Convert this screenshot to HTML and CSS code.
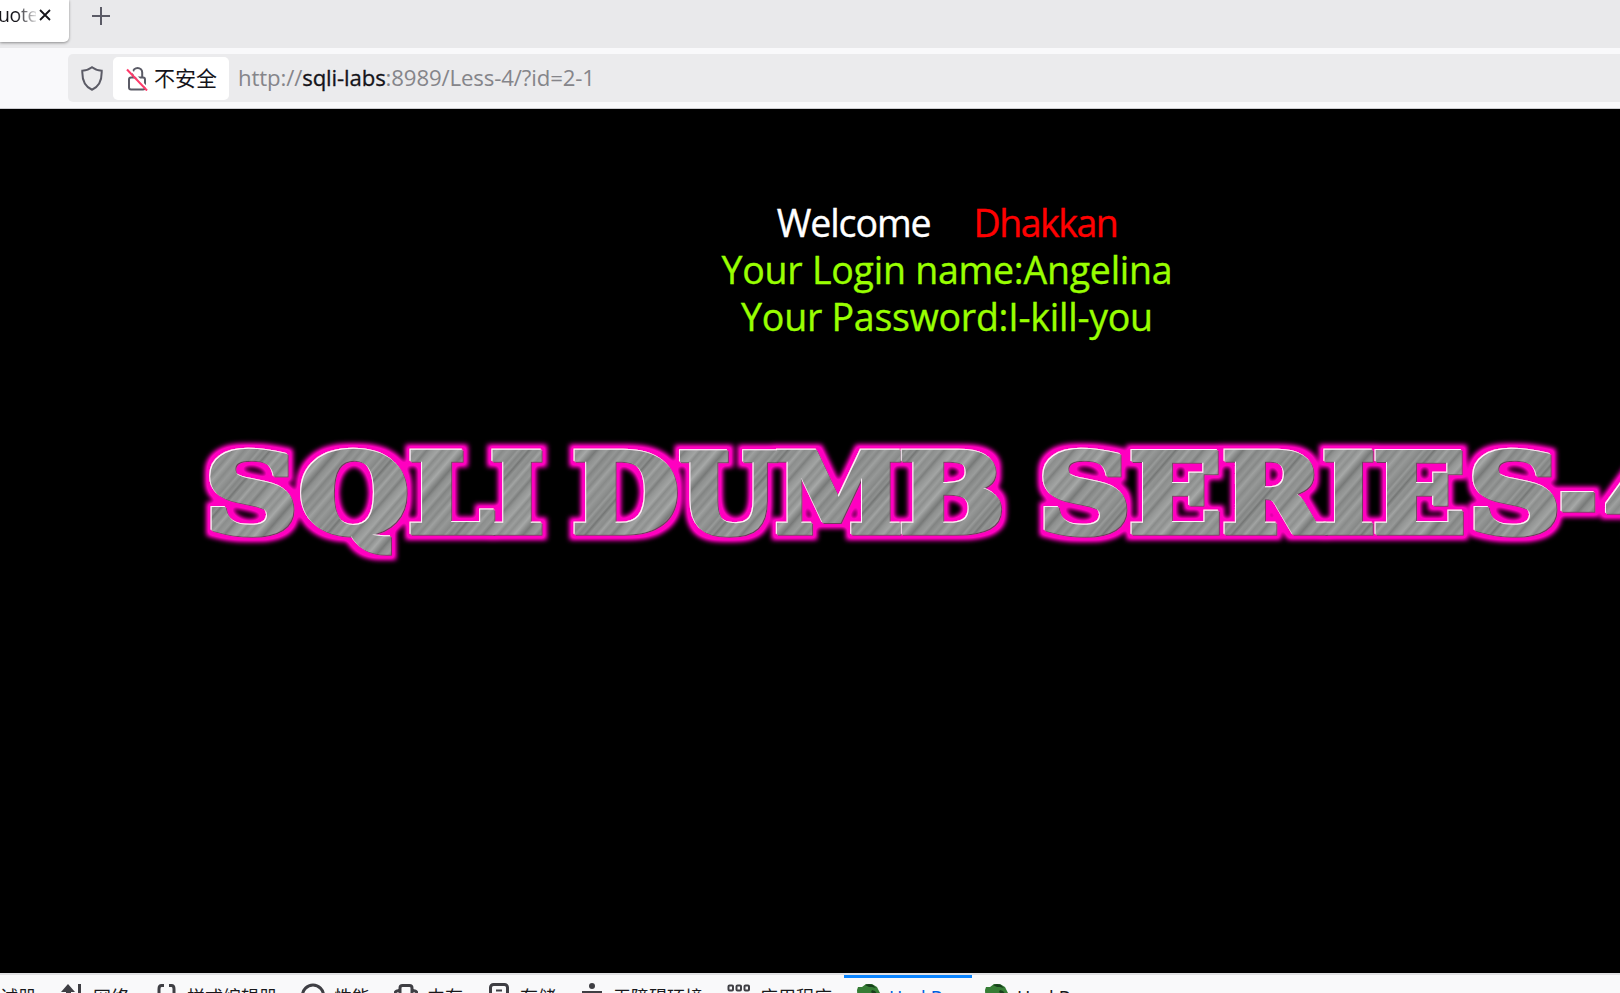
FILE: index.html
```
<!DOCTYPE html>
<html lang="zh-CN">
<head>
<meta charset="utf-8">
<title>Less-4</title>
<link rel="stylesheet" href="styles.css">
</head>
<body>
<header class="tabs">
  <div class="tab"><span class="tab-title">uote</span>
    <svg class="close" viewBox="0 0 12 12"><path d="M1 1l10 10M11 1L1 11"/></svg>
  </div>
  <svg class="plus" viewBox="0 0 18 18"><path d="M9 0v18M0 9h18"/></svg>
</header>
<nav class="toolbar">
  <div class="urlbar">
    <svg class="shield" viewBox="0 0 22 25"><path d="M11 1.2C8 3.6 5 4.3 1.3 4.7c-.3 8.8 1.6 15.7 9.7 19 8.100-3.300 10-10.200 9.700-19C17 4.300 14 3.600 11 1.200z"/></svg>
    <div class="identity">
      <svg class="lock" viewBox="0 0 22 25"><path d="M7 11V6.500a4.600 4.600 0 0 1 9.200 0V11"/><rect x="3" y="11.500" width="16" height="12" rx="2"/><path class="gap" d="M3 2l19 21"/><path class="slash" d="M1 3.500l20 21"/></svg>
      <span class="insecure">不安全</span>
    </div>
    <div class="url">http://<b>sqli-labs</b>:8989/Less-4/?id=2-1</div>
  </div>
</nav>
<main class="page">
  <div class="message">
    <div class="line welcome"><span class="white">Welcome</span><span class="red">Dhakkan</span></div>
    <div class="line login">Your Login name:Angelina</div>
    <div class="line password">Your Password:I-kill-you</div>
  </div>
  <svg class="logo" viewBox="190 420 1430 160">
    <defs>
      <linearGradient id="steel" gradientUnits="userSpaceOnUse" x1="0" y1="0" x2="74" y2="64" spreadMethod="repeat">
        <stop offset="0" stop-color="#868887"/><stop offset=".02" stop-color="#999b9a"/><stop offset=".05" stop-color="#838584"/><stop offset=".08" stop-color="#8f9190"/><stop offset=".1" stop-color="#747675"/><stop offset=".13" stop-color="#939594"/><stop offset=".17" stop-color="#8a8c8b"/><stop offset=".2" stop-color="#a2a4a3"/><stop offset=".23" stop-color="#8b8d8c"/><stop offset=".28" stop-color="#979998"/><stop offset=".31" stop-color="#7d7f7e"/><stop offset=".34" stop-color="#929493"/><stop offset=".4" stop-color="#a3a5a4"/><stop offset=".43" stop-color="#898b8a"/><stop offset=".47" stop-color="#9c9e9d"/><stop offset=".5" stop-color="#8d8f8e"/><stop offset=".55" stop-color="#a7a9a8"/><stop offset=".58" stop-color="#919392"/><stop offset=".62" stop-color="#777978"/><stop offset=".65" stop-color="#8e908f"/><stop offset=".7" stop-color="#9b9d9c"/><stop offset=".73" stop-color="#828483"/><stop offset=".78" stop-color="#959796"/><stop offset=".81" stop-color="#868887"/><stop offset=".85" stop-color="#9fa1a0"/><stop offset=".9" stop-color="#888a89"/><stop offset=".94" stop-color="#979998"/><stop offset="1" stop-color="#868887"/>
      </linearGradient>
      <filter id="glow" filterUnits="userSpaceOnUse" x="190" y="420" width="1460" height="160">
        <feMorphology in="SourceAlpha" operator="dilate" radius="5" result="fat"/>
        <feGaussianBlur in="fat" stdDeviation="2.8" result="blur"/>
        <feComponentTransfer in="blur" result="soft"><feFuncA type="linear" slope="1.35"/></feComponentTransfer>
        <feFlood flood-color="#ff00c0"/><feComposite in2="soft" operator="in" result="pink"/>
        <feOffset in="SourceAlpha" dx="-1" dy="-1" result="up"/>
        <feFlood flood-color="#fff0fb"/><feComposite in2="up" operator="in" result="light"/>
        <feOffset in="SourceAlpha" dx="1" dy="1" result="down"/>
        <feFlood flood-color="#73385f"/><feComposite in2="down" operator="in" result="dark"/>
        <feMerge><feMergeNode in="pink"/><feMergeNode in="dark"/><feMergeNode in="light"/><feMergeNode in="SourceGraphic"/></feMerge>
      </filter>
    </defs>
    <g class="letters" filter="url(#glow)">
      <text x="205" y="532" textLength="93" lengthAdjust="spacingAndGlyphs">S</text>
      <text x="299" y="532" textLength="110" lengthAdjust="spacingAndGlyphs">Q</text>
      <text x="408" y="532" textLength="86" lengthAdjust="spacingAndGlyphs">L</text>
      <text x="490" y="532" textLength="54" lengthAdjust="spacingAndGlyphs">I</text>
      <text x="572" y="532" textLength="107" lengthAdjust="spacingAndGlyphs">D</text>
      <text x="679" y="532" textLength="98" lengthAdjust="spacingAndGlyphs">U</text>
      <text x="775" y="532" textLength="128" lengthAdjust="spacingAndGlyphs">M</text>
      <text x="899" y="532" textLength="106" lengthAdjust="spacingAndGlyphs">B</text>
      <text x="1038" y="532" textLength="93" lengthAdjust="spacingAndGlyphs">S</text>
      <text x="1129" y="532" textLength="93" lengthAdjust="spacingAndGlyphs">E</text>
      <text x="1222" y="532" textLength="101" lengthAdjust="spacingAndGlyphs">R</text>
      <text x="1322" y="532" textLength="53" lengthAdjust="spacingAndGlyphs">I</text>
      <text x="1373" y="532" textLength="93" lengthAdjust="spacingAndGlyphs">E</text>
      <text x="1468" y="532" textLength="93" lengthAdjust="spacingAndGlyphs">S</text>
      <text x="1559" y="531" textLength="38" lengthAdjust="spacingAndGlyphs">-</text>
      <text x="1604" y="532" textLength="88" lengthAdjust="spacingAndGlyphs">4</text>
    </g>
  </svg>
</main>
<footer class="devtools">
  <div class="tool debugger"><span>试器</span></div>
  <div class="tool network"><svg viewBox="0 0 24 24"><path class="solid" d="M1 9L8 1l7 8h-4v14H6V9z"/><path d="M19.500 1v20"/></svg><span>网络</span></div>
  <div class="tool styles"><svg viewBox="0 0 24 24"><path d="M10 2.500H7.500Q5 2.500 5 6v5l-2 2 2 2v5q0 3 3 3M15 2.500h2.500Q20 2.500 20 6v5l2 2-2 2v5q0 3-3 3"/></svg><span>样式编辑器</span></div>
  <div class="tool perf"><svg viewBox="0 0 24 24"><circle cx="12" cy="12.500" r="10.500"/></svg><span>性能</span></div>
  <div class="tool memory"><svg viewBox="0 0 24 24"><path d="M6 21V5q0-2.500 2.500-2.500h7Q18 2.500 18 5v16M6 8Q1 7 1 11M18 8q5-1 5 3"/></svg><span>内存</span></div>
  <div class="tool storage"><svg viewBox="0 0 24 24"><rect x="3.500" y="1.500" width="17" height="21" rx="3"/><path class="thin" d="M9 7.500h6"/></svg><span>存储</span></div>
  <div class="tool access"><svg viewBox="0 0 24 24"><circle class="solid" cx="12" cy="3" r="3"/><path d="M2 9.500h20M12 9v14"/></svg><span>无障碍环境</span></div>
  <div class="tool app"><svg viewBox="0 0 24 24"><g class="thin"><rect x="1.500" y="2.500" width="4.500" height="5" rx="1"/><rect x="9.500" y="2.500" width="4.500" height="5" rx="1"/><rect x="17.500" y="2.500" width="4.500" height="5" rx="1"/></g></svg><span>应用程序</span></div>
  <div class="tool hackbar active"><svg viewBox="0 0 24 24"><path class="leaf" d="M1 7l1-3 4 0 4-3 6 0 5 3 3 6v14H2z"/><path class="shade" d="M9 2l4-1 4 1 3 3-4-1-3 0zM16 7l3 1 3 4-1 5-2-5-4-3z"/></svg><span>HackBar</span></div>
  <div class="tool hackbar"><svg viewBox="0 0 24 24"><path class="leaf" d="M1 7l1-3 4 0 4-3 6 0 5 3 3 6v14H2z"/><path class="shade" d="M9 2l4-1 4 1 3 3-4-1-3 0zM16 7l3 1 3 4-1 5-2-5-4-3z"/></svg><span>HackBar</span></div>
</footer>
</body>
</html>
```
FILE: styles.css
```
* { box-sizing: border-box; }
body { margin: 0; width: 1620px; height: 993px; overflow: hidden; display: flex; flex-direction: column; background: #000; font-family: "Open Sans", "Noto Sans CJK SC", sans-serif; }
svg { display: block; flex: none; fill: none; }
.tabs { height: 48px; flex: none; background: #e9e9eb; display: flex; align-items: flex-start; }
.tab { width: 69px; height: 42px; background: #fff; border-radius: 0 0 5px 0; box-shadow: 0 1px 3px #0006; display: flex; }
.tab-title { width: 36px; line-height: 30px; font-size: 19.5px; letter-spacing: -.4px; text-indent: -2px; overflow: hidden; background: linear-gradient(90deg, #15141a 45%, #15141a22 100%); background-clip: text; color: transparent; }
.close { width: 12px; height: 12px; margin: 9px 0 0 3px; stroke: #15141a; stroke-width: 1.8; }
.plus { width: 18px; height: 18px; margin: 7px 0 0 23px; stroke: #5b5b66; stroke-width: 2; }
.toolbar { height: 61px; flex: none; background: #f9f9fb; border-bottom: 1px solid #ccccd0; padding: 6px 0 6px 68px; display: flex; }
.urlbar { flex: 1; height: 48px; background: #ebebed; border-radius: 5px 0 0 5px; display: flex; align-items: center; }
.shield { width: 22px; height: 25px; margin: 0 10px 0 13px; stroke: #5b5b66; stroke-width: 2; }
.identity { width: 116px; height: 43px; border-radius: 5px; background: #fff; display: flex; align-items: center; padding-left: 13px; gap: 6px; }
.lock { width: 22px; height: 25px; stroke: #5b5b66; stroke-width: 2; }
.lock .gap { stroke: #fff; }
.lock .slash { stroke: #ff3b6b; }
.insecure { font: 21px "Noto Sans CJK SC", sans-serif; color: #15141a; white-space: nowrap; padding-bottom: 2px; }
.url { margin-left: 9px; padding-bottom: 2px; font-size: 22.2px; color: #85858a; white-space: nowrap; letter-spacing: -.13px; }
.url b { font-weight: 400; color: #15141a; -webkit-text-stroke: .3px #15141a; }
.page { height: 864px; flex: none; background: #000; overflow: hidden; }
.message { margin: 90px 0 0 547px; width: 800px; height: 141px; color: #9f0; font-size: 37.5px; -webkit-text-stroke: .35px currentColor; }
.line { height: 47px; line-height: 47px; display: flex; justify-content: center; white-space: nowrap; }
.welcome { gap: 43px; }
.white { color: #fff; letter-spacing: -1.1px; -webkit-text-stroke-color: #fff; }
.red { color: #f00; letter-spacing: -1.5px; -webkit-text-stroke-color: #f00; }
.login, .password { letter-spacing: -.24px; }
.logo { width: 1430px; height: 160px; margin: 80px 0 0 190px; }
.letters { font: bold 109px "DejaVu Serif", serif; fill: url(#steel); stroke: url(#steel); stroke-width: 5.5; }
.devtools { height: 20px; flex: none; background: #f9f9fa; border-top: 2px solid #e0e0e2; display: flex; overflow: hidden; font-family: "Noto Sans", "Noto Sans CJK SC", sans-serif; font-size: 18px; color: #18181a; }
.tool { display: flex; flex: none; height: 40px; padding-top: 8px; gap: 9px; white-space: nowrap; }
.tool svg { width: 24px; height: 24px; stroke: #3f3f44; stroke-width: 3; }
.tool .solid { fill: #3f3f44; stroke: none; }
.tool .thin { stroke-width: 2; }
.tool span { line-height: 26px; padding-top: 1px; }
.debugger { width: 60px; }
.network { width: 94px; }
.styles { width: 147px; }
.perf { width: 93px; }
.memory { width: 93px; }
.storage { width: 93px; }
.access { width: 147px; }
.app { width: 117px; }
.hackbar { width: 128px; padding-left: 12px; }
.active { color: #0060df; border-top: 3px solid #0a84ff; padding-top: 5px; }
.tool .leaf { fill: #367d35; stroke: none; }
.tool .shade { fill: #173f1b; stroke: none; }
```
